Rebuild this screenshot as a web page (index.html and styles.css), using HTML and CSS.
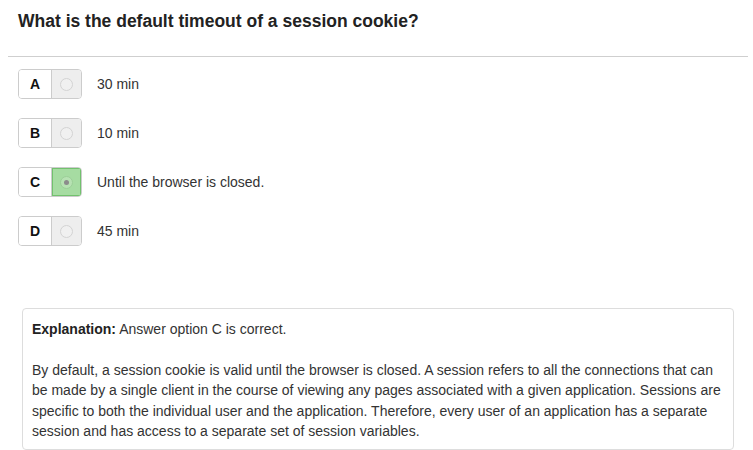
FILE: index.html
```html
<!DOCTYPE html>
<html>
<head>
<meta charset="utf-8">
<link rel="stylesheet" href="styles.css">
</head>
<body>
<div class="page">
  <h1 class="question">What is the default timeout of a session cookie?</h1>
  <hr class="rule">
  <div class="options">
    <div class="option">
      <div class="pick"><span class="letter">A</span><span class="radio-cell"><span class="radio"></span></span></div>
      <span class="answer">30 min</span>
    </div>
    <div class="option">
      <div class="pick"><span class="letter">B</span><span class="radio-cell"><span class="radio"></span></span></div>
      <span class="answer">10 min</span>
    </div>
    <div class="option">
      <div class="pick"><span class="letter">C</span><span class="radio-cell selected"><span class="radio checked"></span></span></div>
      <span class="answer">Until the browser is closed.</span>
    </div>
    <div class="option">
      <div class="pick"><span class="letter">D</span><span class="radio-cell"><span class="radio"></span></span></div>
      <span class="answer">45 min</span>
    </div>
  </div>
  <div class="explanation">
    <p><strong>Explanation:</strong> Answer option C is correct.</p>
    <p>By default, a session cookie is valid until the browser is closed. A session refers to all the connections that can be made by a single client in the course of viewing any pages associated with a given application. Sessions are specific to both the individual user and the application. Therefore, every user of an application has a separate session and has access to a separate set of session variables.</p>
  </div>
</div>
</body>
</html>
```
FILE: styles.css
```css
html, body {
  margin: 0;
  padding: 0;
  background: #fff;
}
body {
  font-family: "Liberation Sans", Arial, sans-serif;
  color: #333;
  font-size: 14px;
}
.page {
  padding: 0 5px 0 8px;
}
.question {
  margin: 0;
  padding: 10px 0 0 10px;
  font-size: 17.5px;
  font-weight: bold;
  line-height: 22px;
  color: #222;
}
.rule {
  margin: 24px 0 0 0;
  border: 0;
  border-top: 1px solid #cfcfcf;
  height: 0;
}
.options {
  display: flex;
  flex-direction: column;
  gap: 19px;
  padding: 12px 0 0 10px;
}
.option {
  display: flex;
  align-items: center;
  gap: 15px;
}
.pick {
  display: flex;
  width: 64px;
  height: 30px;
  box-sizing: border-box;
  border: 1px solid #ccc;
  border-radius: 4px;
  overflow: hidden;
}
.letter {
  width: 32px;
  display: flex;
  align-items: center;
  justify-content: center;
  font-weight: bold;
  font-size: 14px;
  color: #111;
  background: #fff;
  border-right: 1px solid #ccc;
}
.radio-cell {
  flex: 1;
  display: flex;
  align-items: center;
  justify-content: center;
  background: #eee;
}
.radio-cell.selected {
  background: #a6dca2;
  box-shadow: inset 0 0 0 1px #72c16e;
}
.radio {
  width: 11px;
  height: 11px;
  border-radius: 50%;
  border: 1px solid #d3d3d3;
  background: #f0f0f0;
  position: relative;
}
.radio.checked {
  border-color: #9ccf98;
  background: #b7e2b3;
}
.radio.checked::after {
  content: "";
  position: absolute;
  left: 3px;
  top: 3px;
  width: 5px;
  height: 5px;
  border-radius: 50%;
  background: #8c8c8c;
}
.answer {
  font-size: 14px;
  color: #333;
}
.explanation {
  margin: 62px 14px 0 14px;
  border: 1px solid #ddd;
  border-radius: 4px;
  padding: 10px 9px 7px 9px;
  line-height: 20.5px;
}
.explanation p {
  margin: 0;
}
.explanation p + p {
  margin-top: 20px;
}
.explanation strong {
  color: #222;
}
```
